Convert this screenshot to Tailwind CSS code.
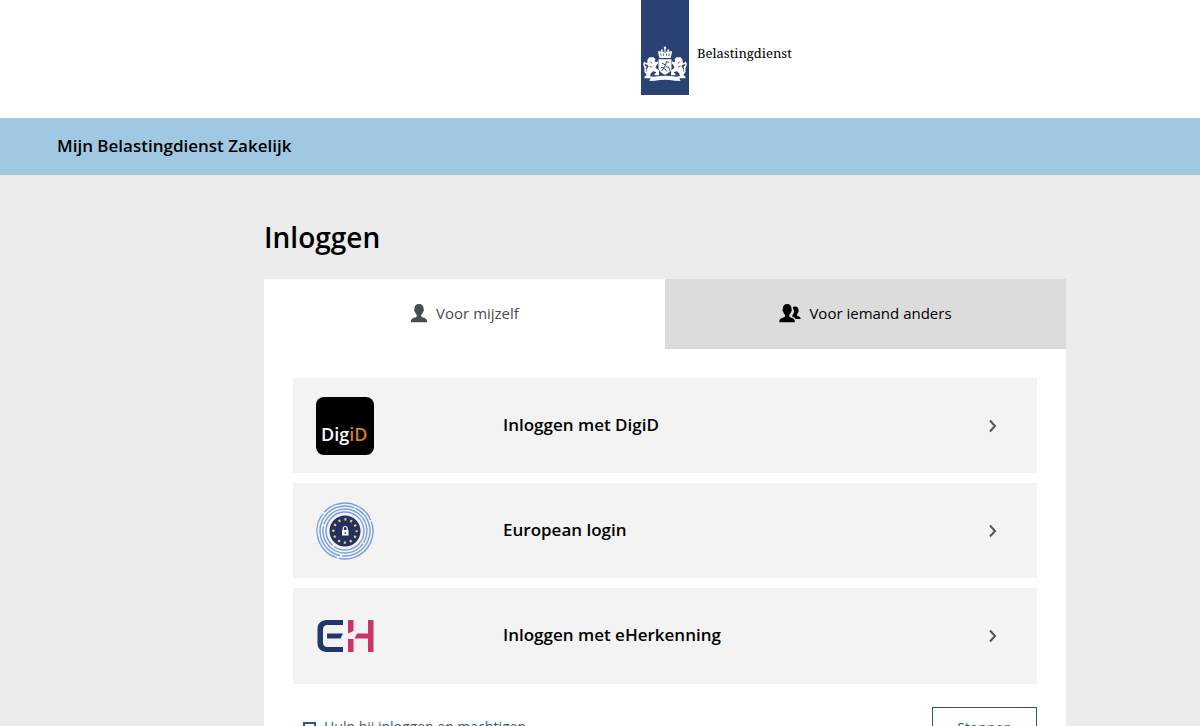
<!DOCTYPE html>
<html lang="nl">
<head>
  <meta charset="UTF-8">
  <meta name="viewport" content="width=device-width, initial-scale=1.0">
  <title>Inloggen - Mijn Belastingdienst Zakelijk</title>
  <!-- Tailwind CSS -->
  <script src="https://cdn.jsdelivr.net/npm/@tailwindcss/browser@4"></script>
</head>
<body class="font-['Open_Sans','Noto_Sans',sans-serif] bg-[#ececec] text-black overflow-x-hidden">

  <!-- Header -->
  <header class="bg-white h-[118px] pl-[130px] flex justify-center">
    <a href="#" class="relative block w-12 h-[95px] bg-[#2a4374]">
      <svg class="block w-12 h-[95px]" viewBox="0 0 48 95" fill="#fff" aria-hidden="true">
        <!-- Crown -->
        <circle cx="24" cy="47.800" r="1.200"/>
        <path d="M23.400 48h1.200v4h-1.200zM18.500 58l-1.300-4.500c1-2.800 4.200-2.800 6.800-.8 2.600-2 5.800-2 6.800.8L29.500 58z"/>
        <path d="M20.300 56l-.8-2.400M22.500 55.800v-2.300M25.500 55.800v-2.300M27.700 56l.8-2.400" stroke="#2a4374" stroke-width=".8"/>
        <circle cx="18" cy="52" r="1"/><circle cx="20.800" cy="50.300" r="1"/><circle cx="27.200" cy="50.300" r="1"/><circle cx="30" cy="52" r="1"/>
        <!-- Shield -->
        <path d="M17.500 59.200h13v8.300c0 3.800-3.300 5.800-6.500 7.200-3.200-1.400-6.500-3.400-6.500-7.200z"/>
        <path d="M20.500 71l2.500-3-3-.5M23 68l1.500-3-3.500-2M24.500 65l1-3.500 2.500 1M25 66.500l3 1 .5 3M23.500 68.500l2.500 3" fill="none" stroke="#2a4374" stroke-width="1"/>
        <!-- Lions -->
        <g id="lion">
          <path d="M6.500 59.500l2-2.300 4 .1 2 2-.8 2 1.300 1 2-1v2.200l-1.500 1.800-1 2.700 3.500 2v5.200h-4.500v-1.500l1.500-.7v-1.100l-3-.7-2.500 2.500-.5 4.500H3.500v-1.800l1.800-1 .2-5.700 2-3.200-1.300-3.200z"/>
          <path d="M6.200 73.500c-4.200-1.700-.7-4.500-2.200-7-1.500-1.200-1.300-3 0-4.500M3.500 62.800l3.500 1.700M5.500 67H3" fill="none" stroke="#fff" stroke-width="1.500"/>
          <path d="M9.500 61.500l1.500 2M8.500 66l2.500 1.300" stroke="#2a4374" stroke-width=".8"/>
        </g>
        <use href="#lion" transform="matrix(-1 0 0 1 48 0)"/>
        <!-- Ribbon -->
        <path d="M8 76l5 .8c7-1.300 15-1.300 22 0l5-.8-1.500 2.500 1 2.500-5.500-.3c-7-1.400-13-1.400-20 0l-5.500.3 1-2.500z"/>
      </svg>
      <span class="absolute left-14 top-[43px] font-['Noto_Serif','Liberation_Serif',serif] text-[13px] leading-5">Belastingdienst</span>
    </a>
  </header>

  <!-- Title bar -->
  <div class="bg-[#a1c8e3] h-[57px] px-[57px] pb-0.5 flex items-center">
    <p class="text-[17px] leading-6 font-semibold">Mijn Belastingdienst Zakelijk</p>
  </div>

  <!-- Login -->
  <div class="pl-[130px]">
    <main class="max-w-[802px] mx-auto pt-11">
      <h1 class="text-[28px] leading-9 font-semibold mb-6">Inloggen</h1>

      <!-- Tabs -->
      <div role="tablist" class="grid grid-cols-2 h-[70px]">
        <button role="tab" aria-selected="true" class="bg-white text-[#474c53] text-[15px] pb-0.5 flex items-center justify-center gap-2 cursor-pointer">
          <svg class="w-[18px] h-5" viewBox="0 0 18 20" fill="currentColor" aria-hidden="true">
            <path d="M9 1c3.200 0 4.800 2 4.600 5.200.6.600.3 2-.5 2.600-.4 1.500-1 2.400-1.800 3v1.400c0 1 1.700 1.300 3.300 1.900 1.900.7 2.600 1.900 2.600 4.200H.8c0-2.300.7-3.500 2.600-4.200 1.600-.6 3.300-.9 3.300-1.900v-1.400c-.8-.6-1.400-1.500-1.800-3-.8-.6-1.100-2-.5-2.600C4.200 3 5.800 1 9 1z"/>
          </svg>
          Voor mijzelf
        </button>
        <button role="tab" aria-selected="false" class="bg-[#dcdcdc] text-[15px] pb-0.5 flex items-center justify-center gap-2 cursor-pointer">
          <svg class="w-[22px] h-5" viewBox="0 0 22 20" fill="currentColor" aria-hidden="true">
            <path d="M8.200 1c3 0 4.500 2 4.300 5.200.6.600.3 2-.5 2.600-.4 1.500-.9 2.400-1.700 3v1.400c0 1 1.600 1.300 3.100 1.900 1.800.7 2.500 1.900 2.500 4.200H.3c0-2.300.7-3.500 2.500-4.200 1.500-.6 3.200-.9 3.200-1.900v-1.400c-.8-.6-1.400-1.500-1.700-3-.8-.6-1.100-2-.5-2.600C3.600 3 5.200 1 8.200 1z"/>
            <path d="M13.600 4.800c.6-.8 1.400-1.200 2.600-1.200 2.400 0 3.400 1.500 3.300 3.800.4.500.2 1.400-.4 1.800-.2 1-.6 1.600-1.100 2v1c0 .8 1 .9 2 1.300 1.200.5 1.700 1.200 1.700 2.500h-5.100c-.6-1.300-1.600-2-3.400-2.600v-.9c.5-.4.9-1.100 1.100-2 .8-.9 1-1.900.6-3-.2-1-.7-1.900-1.300-2.700z"/>
          </svg>
          Voor iemand anders
        </button>
      </div>

      <!-- Tab panel -->
      <div role="tabpanel" class="bg-white px-[29px] pt-[29px] pb-10">
        <ul class="flex flex-col gap-[10px]">
          <li>
            <a href="#" class="bg-[#f3f3f3] hover:bg-[#e6e6e6] h-[95px] pl-[23px] pr-[39px] flex items-center">
              <svg class="w-[58px] h-[58px]" viewBox="0 0 58 58" aria-hidden="true">
                <rect width="58" height="58" rx="8" fill="#000"/>
                <text x="5" y="44" font-family="Open Sans, Noto Sans, sans-serif" font-size="18" font-weight="600" fill="#fff">Dig<tspan fill="#d47b33">iD</tspan></text>
              </svg>
              <span class="ml-[129px] flex-1 pb-0.5 text-[17px] leading-6 font-semibold">Inloggen met DigiD</span>
              <svg class="w-[10px] h-4" viewBox="0 0 10 16" fill="none" stroke="#555" stroke-width="2" aria-hidden="true"><path d="M2 2.500l5 5.500-5 5.500"/></svg>
            </a>
          </li>
          <li>
            <a href="#" class="bg-[#f3f3f3] hover:bg-[#e6e6e6] h-[95px] pl-[23px] pr-[39px] flex items-center">
              <svg class="w-[58px] h-[58px]" viewBox="0 0 58 58" fill="none" aria-hidden="true">
                <g stroke="#779fdc" stroke-width="1.400">
                  <circle cx="29" cy="29" r="28" stroke-dasharray="60 2 54 2 56 2" transform="rotate(-20 29 29)"/>
                  <circle cx="29" cy="29" r="25" stroke-dasharray="70 2 83 2" transform="rotate(-65 29 29)"/>
                  <circle cx="29" cy="29" r="22" stroke-dasharray="60 2 74 2" transform="rotate(35 29 29)"/>
                  <circle cx="29" cy="29" r="19" stroke-dasharray="117 2" transform="rotate(130 29 29)"/>
                </g>
                <circle cx="29" cy="29" r="15.500" fill="#262f62"/>
                <!-- Stars -->
                <circle cx="29" cy="29" r="11.600" stroke="#d5cf62" stroke-width="2.400" stroke-dasharray="2.200 3.873" stroke-dashoffset="1.100"/>
                <!-- Lock -->
                <rect x="26" y="28" width="6.500" height="5.500" rx=".6" fill="#fff"/>
                <path d="M27.200 28.500v-2a2 2 0 0 1 4 0v2" stroke="#fff" stroke-width="1.200"/>
                <path d="M29.200 30v2" stroke="#262f62" stroke-width="1"/>
              </svg>
              <span class="ml-[129px] flex-1 pb-0.5 text-[17px] leading-6 font-semibold">European login</span>
              <svg class="w-[10px] h-4" viewBox="0 0 10 16" fill="none" stroke="#555" stroke-width="2" aria-hidden="true"><path d="M2 2.500l5 5.500-5 5.500"/></svg>
            </a>
          </li>
          <li>
            <a href="#" class="bg-[#f3f3f3] hover:bg-[#e6e6e6] h-24 pl-[23px] pr-[39px] flex items-center">
              <svg class="w-[58px] h-[58px]" viewBox="0 0 58 58" aria-hidden="true">
                <g fill="#23376f">
                  <path d="M27 13v5H12c-3.500 0-5 1.500-5 5v12c0 3.500 1.500 5 5 5h15v5H11c-6 0-9.500-3.500-9.500-9V22c0-5.500 3.500-9 9.500-9z"/>
                  <path d="M11 26.500h16L24.500 31.500H11z"/>
                </g>
                <g fill="#cc3366">
                  <path d="M32 13h5.500v11L32 26.500z"/>
                  <path d="M32 32h5.500v13H32z"/>
                  <path d="M41 26.500H52V13h5.500v32H52V31.500H38.500z"/>
                </g>
              </svg>
              <span class="ml-[129px] flex-1 pb-0.5 text-[17px] leading-6 font-semibold">Inloggen met eHerkenning</span>
              <svg class="w-[10px] h-4" viewBox="0 0 10 16" fill="none" stroke="#555" stroke-width="2" aria-hidden="true"><path d="M2 2.500l5 5.500-5 5.500"/></svg>
            </a>
          </li>
        </ul>

        <div class="mt-[23px] flex items-start justify-between text-[#2a5885] text-[14px] font-medium">
          <a href="#" class="ml-[10px] mt-2 flex items-center gap-2 leading-6 hover:underline">
            <svg class="w-[13px] h-4" viewBox="0 0 13 16" fill="none" stroke="currentColor" stroke-width="2" aria-hidden="true"><path d="M1 4h11v10H1z"/></svg>
            Hulp bij inloggen en machtigen
          </a>
          <button class="w-[105px] h-10 border border-[#2a5885] hover:bg-[#f3f3f3] cursor-pointer">Stoppen</button>
        </div>
      </div>
    </main>
  </div>

</body>
</html>
